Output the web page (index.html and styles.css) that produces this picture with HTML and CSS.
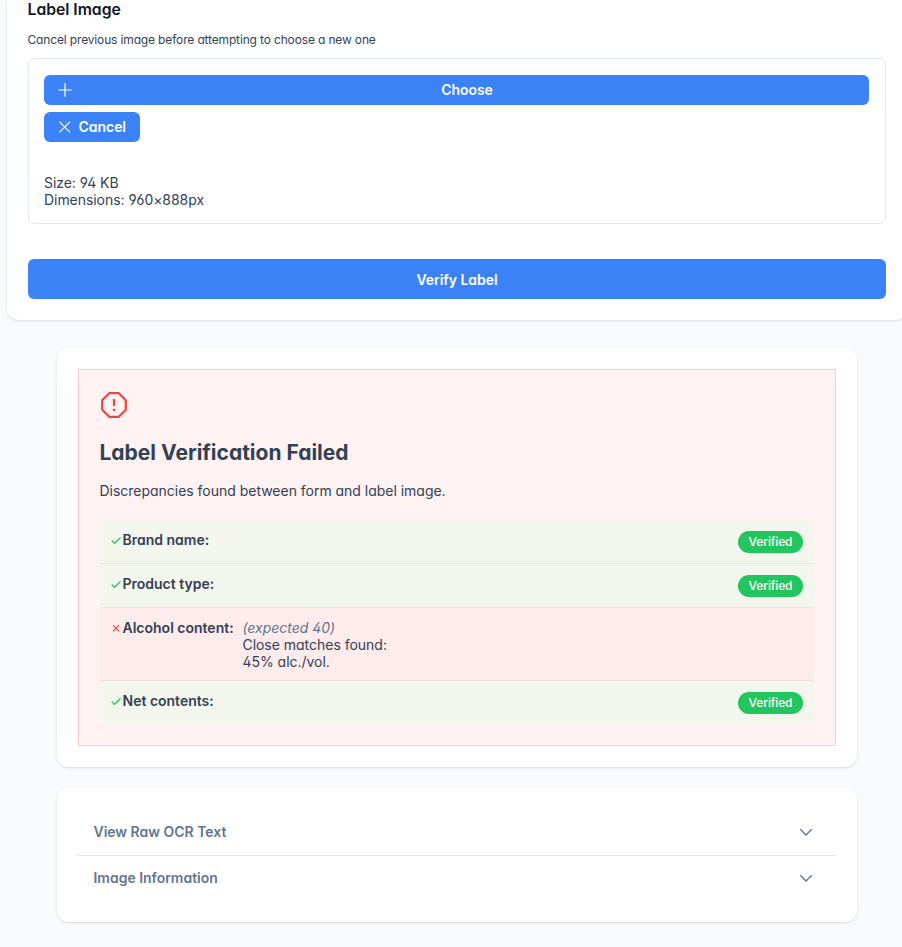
FILE: index.html
```html
<!DOCTYPE html>
<html lang="en">
<head>
<meta charset="utf-8">
<title>Label Verification</title>
<link rel="stylesheet" href="styles.css">
</head>
<body>
<main class="page">
  <section class="card form-card">
    <h2 class="section-title">Label Image</h2>
    <p class="hint">Cancel previous image before attempting to choose a new one</p>
    <div class="upload">
      <button class="btn btn-choose">
        <svg class="icon" viewBox="0 0 14 14"><path d="M7 .3v13.4M.3 7h13.4"/></svg>
        <span class="btn-label">Choose</span>
      </button>
      <button class="btn btn-cancel">
        <svg class="icon" viewBox="0 0 14 14"><path d="M1.5 1.5l11 11M12.5 1.5l-11 11"/></svg>
        <span>Cancel</span>
      </button>
      <div class="file-info">
        <div>Size: 94 KB</div>
        <div>Dimensions: 960×888px</div>
      </div>
    </div>
    <button class="btn btn-verify">Verify Label</button>
  </section>

  <section class="card result-card">
    <div class="alert">
      <svg class="alert-icon" viewBox="0 0 28 28"><path d="M9.2 2.2h9.6l7 7v9.6l-7 7H9.2l-7-7V9.200z"/><path d="M14 8v7M14 17.700v2.200"/></svg>
      <h2 class="alert-title">Label Verification Failed</h2>
      <p class="alert-text">Discrepancies found between form and label image.</p>
      <ul class="checks">
        <li class="check ok">
          <svg class="mark" viewBox="0 0 12 12"><path d="M1.700 6.500l2.800 2.800 6-5.800"/></svg>
          <strong>Brand name:</strong><span class="badge">Verified</span>
        </li>
        <li class="check ok">
          <svg class="mark" viewBox="0 0 12 12"><path d="M1.700 6.500l2.800 2.800 6-5.800"/></svg>
          <strong>Product type:</strong><span class="badge">Verified</span>
        </li>
        <li class="check bad">
          <svg class="mark" viewBox="0 0 12 12"><path d="M3 3.200l6.200 6.200M9.200 3.200l-6.200 6.200"/></svg>
          <strong>Alcohol content:</strong>
          <div class="detail"><em>(expected 40)</em><br>Close matches found:<br>45% alc./vol.</div>
        </li>
        <li class="check ok">
          <svg class="mark" viewBox="0 0 12 12"><path d="M1.700 6.500l2.800 2.800 6-5.800"/></svg>
          <strong>Net contents:</strong><span class="badge">Verified</span>
        </li>
      </ul>
    </div>
  </section>

  <section class="card details-card">
    <div class="panel">
      <span>View Raw OCR Text</span>
      <svg class="chevron" viewBox="0 0 14 14"><path d="M1.300 4.300L7 10l5.700-5.700"/></svg>
    </div>
    <div class="panel">
      <span>Image Information</span>
      <svg class="chevron" viewBox="0 0 14 14"><path d="M1.300 4.300L7 10l5.700-5.700"/></svg>
    </div>
  </section>
</main>
</body>
</html>
```
FILE: styles.css
```css
* { box-sizing: border-box; }
html, body { margin: 0; height: 947px; overflow: hidden; }
body {
  background: #f8fafc;
  color: #334155;
  font: 14px/17px Inter, "Liberation Sans", sans-serif;
  font-feature-settings: "cv02", "cv03", "cv04", "cv11";
  letter-spacing: -.02px;
}
h2, p, ul { margin: 0; padding: 0; }
.page { width: 900px; margin-left: 7px; }
.card {
  background: #fff;
  border-radius: 12px;
  padding: 21px;
  box-shadow: 0 1px 3px rgba(0, 0, 0, .1), 0 1px 2px -1px rgba(0, 0, 0, .1);
}
.form-card {
  height: 320px;
  padding-top: 0;
  border-radius: 0 0 12px 12px;
}
.section-title {
  margin-left: -.5px;
  color: #0f172a;
  font-size: 15.750px;
  line-height: 19px;
  font-weight: 600;
}
.hint { margin: 13px 0 0 -.5px; font-size: 12px; line-height: 15px; letter-spacing: -.15px; }
.upload {
  display: flex;
  flex-direction: column;
  align-items: flex-start;
  height: 166px;
  margin-top: 11px;
  padding: 16px 16px 0 15px;
  border: 1px solid #e2e8f0;
  border-radius: 6px;
}
.btn {
  display: flex;
  align-items: center;
  height: 30px;
  padding: 0 14px;
  border: 0;
  border-radius: 6px;
  background: #3b82f6;
  color: #fff;
  font: inherit;
  font-feature-settings: inherit;
  letter-spacing: -.04px;
  font-weight: 600;
}
.btn span { padding-bottom: 1px; }
.icon { width: 14px; height: 14px; fill: none; stroke: #fff; stroke-width: 1.200; }
.btn-choose { width: 100%; }
.btn-choose .btn-label { flex: 1; padding-left: 7px; text-align: center; }
.btn-cancel { width: 96px; gap: 7px; margin-top: 7px; }
.file-info { margin-top: 32px; letter-spacing: -.05px; }
.btn-verify { justify-content: center; width: 100%; height: 40px; margin-top: 35px; padding-top: 1px; }

.result-card { width: 800px; height: 419px; margin: 28px 0 0 50px; }
.alert {
  height: 377px;
  padding: 21px 21px 0 20.500px;
  border: 1px solid #fecaca;
  background: #fef2f2;
}
.alert-icon { display: block; width: 28px; height: 28px; margin-left: .5px; fill: none; stroke: #ef4444; stroke-width: 2.200; stroke-linejoin: round; }
.alert-title { margin-top: 21px; font-size: 21px; line-height: 26px; font-weight: 700; letter-spacing: 0; }
.alert-text { margin-top: 16px; }
.checks { margin-top: 21px; border-radius: 6px; overflow: hidden; list-style: none; }
.check {
  display: flex;
  align-items: flex-start;
  min-height: 44px;
  padding: 11px 11px 10px 10.500px;
  border-bottom: 1px solid rgba(0, 0, 0, .05);
}
.check:last-child { min-height: 43px; border-bottom: 0; }
.check strong { margin-left: .5px; font-weight: 600; letter-spacing: 0; }
.ok { background: #f2f6ec; }
.bad { min-height: 73px; background: #feebeb; }
.mark { width: 12px; height: 12px; margin-top: 3px; fill: none; stroke: #22c55e; stroke-width: 1.200; }
.bad .mark { stroke: #ef4444; }
.badge {
  width: 65px;
  margin-left: auto;
  border-radius: 11px;
  background: #22c55e;
  color: #fff;
  font-size: 12px;
  line-height: 22px;
  font-weight: 500;
  letter-spacing: -.12px;
  text-align: center;
}
.detail { margin-left: 8.800px; }
.detail em { color: #64748b; }

.details-card { width: 800px; height: 134px; margin: 21px 0 0 50px; }
.panel {
  display: flex;
  align-items: center;
  justify-content: space-between;
  height: 46px;
  padding: 0 23px 2px 15.500px;
  color: #64748b;
  font-weight: 600;
}
.panel:first-child { height: 47px; border-bottom: 1px solid #e2e8f0; }
.panel:last-child { padding-bottom: 3px; }
.chevron { width: 14px; height: 14px; margin-top: 1px; fill: none; stroke: #64748b; stroke-width: 1.400; }
```
